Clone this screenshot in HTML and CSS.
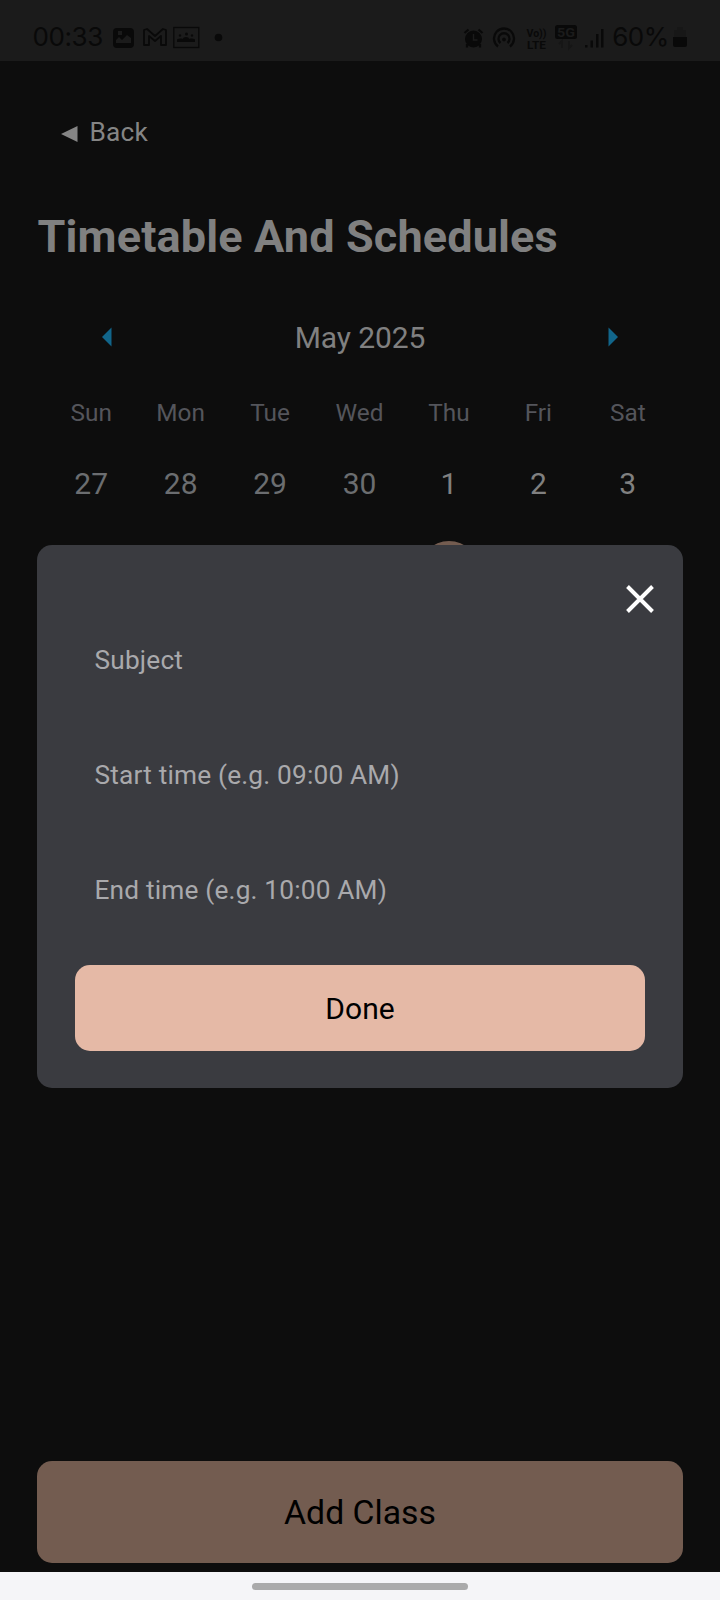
FILE: index.html
```html
<!DOCTYPE html>
<html lang="en">
<head>
<meta charset="utf-8">
<title>Timetable And Schedules</title>
<link rel="stylesheet" href="styles.css">
</head>
<body>
<div class="screen">
  <header class="status">
    <span class="clock">00:33</span>
    <svg class="notifications" width="112" height="24" viewBox="112 25 112 24">
      <path fill="currentColor" fill-rule="evenodd" d="M117 28h13q4 0 4 4v12q0 4-4 4h-13q-4 0-4-4V32q0-4 4-4zM116 43h15v-5l-4-3-5 5-3-3-3 3zM118 31h4v4h-4z"/>
      <path fill="none" stroke="currentColor" stroke-width="1.8" stroke-linejoin="round" d="M144 45V30l3-1 8 7 8-7 3 1v15h-5V36l-6 5-6-5v9z"/>
      <rect x="173.800" y="27.500" width="25" height="20" fill="none" stroke="currentColor" stroke-width="1.300"/>
      <path fill="currentColor" d="M177 42v-2q0-1.500 3-1.500h1q2 0 2 .500 0-2 3-2t3 2q0-.500 2-.500h1q3 0 3 1.500v2z"/>
      <circle cx="180" cy="35.500" r="1.200" fill="currentColor"/><circle cx="186.500" cy="34" r="1.500" fill="currentColor"/><circle cx="192" cy="35.500" r="1.200" fill="currentColor"/>
      <circle cx="218.500" cy="37.500" r="3.800" fill="currentColor"/>
    </svg>
    <svg class="indicators" width="144" height="30" viewBox="462 21 144 30">
      <g fill="none" stroke="currentColor">
        <circle cx="473.500" cy="38" r="8" fill="currentColor"/>
        <path stroke-width="2.200" d="m464.500 32 4-3.500m10 0 4 3.500M467 43v3.500m13-3.500v3.500"/>
        <path d="M473.500 33V39h4" stroke="#1b1b1b" stroke-width="1.500"/>
        <path stroke-width="2.300" d="M498 45.500a10 10 0 1 1 12 0M500.500 42a5.500 5.500 0 1 1 7 0"/>
        <circle cx="504" cy="38.500" r="1.500" fill="currentColor"/>
      </g>
      <rect x="555" y="24" width="22" height="14" rx="2.500" fill="currentColor"/>
      <g font-family="Roboto, sans-serif" font-weight="700">
        <text x="526.500" y="35.500" font-size="10.200" textLength="20" lengthAdjust="spacingAndGlyphs" fill="currentColor">Vo))</text>
        <text x="527" y="47.600" font-size="10.200" textLength="19" lengthAdjust="spacingAndGlyphs" fill="currentColor">LTE</text>
        <text x="557" y="35.800" font-size="13.500" textLength="18" lengthAdjust="spacingAndGlyphs" fill="#1b1b1b">5G</text>
      </g>
      <path stroke="#161616" stroke-width="2" fill="none" d="M562 47v-7l-3 3m10-3v7l3-3"/>
      <path fill="currentColor" d="M585 44h2.500v2.500H585zM590.500 39.500h2.500v7h-2.500zM596 33h2.500v13.500H596zM601 28h2.500v18.500H601z"/>
    </svg>
    <span class="percent">60%</span>
    <svg class="battery" width="16" height="22" viewBox="0 0 16 22"><path fill="#171717" d="M5 1h6v3h3v7H2V4h3z"/><path fill="currentColor" d="M1 11h14v8q0 2-2 2H3q-2 0-2-2z"/></svg>
  </header>
  <main class="page">
    <div class="back"><svg width="17" height="18" viewBox="0 0 17 18"><path fill="currentColor" d="M0 9 16.500 1v16z"/></svg><span>Back</span></div>
    <h1 class="title">Timetable And Schedules</h1>
    <section class="calendar">
      <div class="month">
        <svg width="10" height="20" viewBox="0 0 10 20"><path fill="currentColor" d="M0 10 9.500.500v19z"/></svg>
        <span class="month-name">May 2025</span>
        <svg width="10" height="20" viewBox="0 0 10 20"><path fill="currentColor" d="M10 10 .500.500v19z"/></svg>
      </div>
      <div class="week names"><span>Sun</span><span>Mon</span><span>Tue</span><span>Wed</span><span>Thu</span><span>Fri</span><span>Sat</span></div>
      <div class="week dates"><span class="outside">27</span><span class="outside">28</span><span class="outside">29</span><span class="outside">30</span><span>1</span><span>2</span><span>3</span></div>
      <div class="week"><i class="selected"></i></div>
    </section>
    <div class="add">Add Class</div>
  </main>
  <footer class="nav"><div class="handle"></div></footer>
  <section class="modal">
    <svg class="close" width="28" height="28" viewBox="0 0 28 28"><path fill="none" stroke="currentColor" stroke-width="3.900" d="m1.500 1.500 25 25m0-25-25 25"/></svg>
    <div class="field">Subject</div>
    <div class="field">Start time (e.g. 09:00 AM)</div>
    <div class="field">End time (e.g. 10:00 AM)</div>
    <div class="done">Done</div>
  </section>
</div>
</body>
</html>
```
FILE: styles.css
```css
* { box-sizing: border-box; }
body { margin: 0; background: #0d0d0d; font-family: Roboto, sans-serif; }
svg { display: block; flex: none; }
.screen { position: relative; width: 720px; height: 1600px; display: flex; flex-direction: column; overflow: hidden; }
.status { height: 61px; background: #1b1b1b; color: #090909; display: flex; align-items: center; padding: 13px 32px 0 32.5px; font-family: Inter, sans-serif; font-size: 26px; line-height: 32px; }
.clock { width: 79.5px; letter-spacing: -.4px; }
.notifications { margin-right: 238px; }
.indicators { margin-right: 6.5px; }
.percent { width: 60px; letter-spacing: -.5px; }
.battery { margin-left: auto; }
.page { flex: 1; display: flex; flex-direction: column; padding: 56px 37px 9.5px; color: #808080; }
.back { display: flex; align-items: center; gap: 12px; padding-left: 23.5px; font-size: 26.25px; line-height: 30px; letter-spacing: .2px; color: #858585; }
.back svg { margin-top: 3px; }
.title { margin: 63px 0 0 .5px; font-size: 45px; line-height: 54px; font-weight: 700; letter-spacing: .15px; }
.calendar { padding: 0 10.5px 0 9.5px; }
.month { display: flex; justify-content: space-between; align-items: center; margin-top: 55px; padding: 0 54px 0 55px; font-size: 30px; line-height: 36px; color: #11658a; }
.month-name { color: #808080; position: relative; top: 1px; letter-spacing: -.1px; }
.week { display: grid; grid-template-columns: repeat(7, 1fr); text-align: center; }
.names { margin-top: 43px; font-size: 24.375px; line-height: 30px; color: #54555b; }
.dates { margin-top: 38px; font-size: 30px; line-height: 36px; }
.outside { color: #6b6d70; }
.selected { grid-column: 5; justify-self: center; margin-top: 39px; width: 60px; height: 60px; border-radius: 50%; background: #735c50; }
.add { margin-top: auto; height: 102px; border-radius: 15px; background: #735c50; color: #000; display: flex; align-items: center; justify-content: center; font-size: 33.75px; padding-top: 2px; }
.nav { height: 28px; background: #f5f5f8; display: flex; justify-content: center; padding-top: 11px; }
.handle { width: 216px; height: 7px; border-radius: 4px; background: #aaaaab; }
.modal { position: absolute; left: 37px; top: 545px; width: 646px; height: 542.5px; padding: 40px 38px 36.8px; border-radius: 15px; background: #3a3b40; display: flex; flex-direction: column; }
.close { align-self: flex-end; margin-right: -9px; color: #fff; }
.field { height: 84px; margin-bottom: 31px; display: flex; align-items: center; padding: 0 19.5px; font-size: 26.25px; letter-spacing: .18px; color: #a9a9ac; }
.close + .field { margin-top: 5px; }
.done { margin-top: auto; height: 86px; flex: none; border-radius: 15px; background: #e5b9a6; color: #000; display: flex; align-items: center; justify-content: center; font-size: 30px; padding-top: 1px; }
.field:nth-last-child(2) { margin-bottom: 0; }
```
